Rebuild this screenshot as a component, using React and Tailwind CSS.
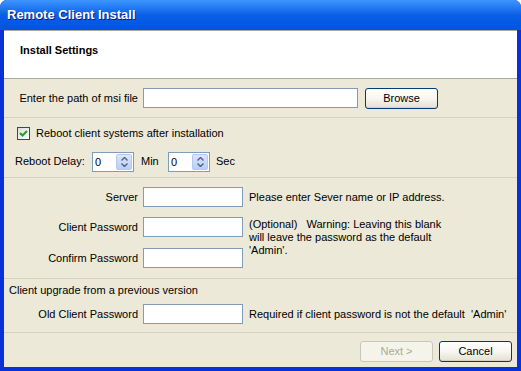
import React from 'react'

function TextBox({ className = '' }) {
    return <div className={`h-[20px] bg-white border border-[#7f9db9] ${className}`} />
}

function XpButton({ children, disabled }) {
    if (disabled) {
        return (
            <div className="w-[73px] h-[21px] rounded-[3px] border border-[#c9c7ba] bg-[#f5f4ea] text-[#aca899] flex items-center justify-center">
                {children}
            </div>
        )
    }
    return (
        <div className="w-[73px] h-[21px] rounded-[3px] border border-[#003c74] bg-gradient-to-b from-white via-[#f7f6f1] to-[#e3e0d2] text-black flex items-center justify-center shadow-[inset_0_-1px_0_#d6d0c5]">
            {children}
        </div>
    )
}

function Spinner() {
    return (
        <div className="w-[42px] h-[20px] bg-white border border-[#7f9db9] flex items-stretch">
            <div className="flex-1 pl-[2px] leading-[18px]">0</div>
            <div className="w-[16px] m-[1px] rounded-[2px] bg-gradient-to-b from-[#dbe6fc] to-[#b9cdf7] border border-[#b4c8f6] flex flex-col items-center justify-center gap-[2px]">
                <svg width="7" height="4" viewBox="0 0 7 4"><path d="M0.5 3.5 L3.5 0.5 L6.5 3.5" fill="none" stroke="#4d6185" strokeWidth="1.4" /></svg>
                <svg width="7" height="4" viewBox="0 0 7 4"><path d="M0.5 0.5 L3.5 3.5 L6.5 0.5" fill="none" stroke="#4d6185" strokeWidth="1.4" /></svg>
            </div>
        </div>
    )
}

function Label({ children }) {
    return <div className="w-[139px] pr-[5px] text-right">{children}</div>
}

export default function App() {
    return (
        <div className="w-[521px] h-[371px] rounded-t-[7px] bg-[#0831d9] flex flex-col text-[11px] text-black" style={{ fontFamily: '"Liberation Sans", Arial, sans-serif' }}>
            <div className="h-[30px] rounded-t-[7px] bg-gradient-to-b from-[#3d95ff] via-[#0a5fe6] to-[#0054e3] flex items-center px-[7px] shrink-0">
                <span className="text-white font-bold text-[13px] [text-shadow:1px_1px_0_#0a1883]">Remote Client Install</span>
            </div>
            <div className="flex-1 mx-[4px] mb-[4px] bg-[#ece9d8] flex flex-col">
                <div className="h-[49px] bg-white border-t border-[#aca899] border-b border-b-[#aca899] pl-[16px] pt-[11px] font-bold">
                    Install Settings
                </div>
                <div className="h-[38px] flex items-center">
                    <Label>Enter the path of msi file</Label>
                    <TextBox className="w-[215px]" />
                    <div className="ml-[7px]"><XpButton>Browse</XpButton></div>
                </div>
                <div className="h-[60px] border-t border-[#d6d2c2] flex flex-col">
                    <div className="flex items-center pl-[13px] pt-[7px] gap-[6px]">
                        <div className="w-[13px] h-[13px] border border-[#1c5180] bg-gradient-to-br from-[#dcdcd7] to-white flex items-center justify-center">
                            <svg width="9" height="9" viewBox="0 0 9 9"><path d="M1 4 L3.5 6.5 L8 2" fill="none" stroke="#21a121" strokeWidth="2" /></svg>
                        </div>
                        <span>Reboot client systems after installation</span>
                    </div>
                    <div className="flex items-center pl-[11px] mt-[10px]">
                        <span className="w-[77px]">Reboot Delay:</span>
                        <Spinner />
                        <span className="ml-[7px] w-[27px]">Min</span>
                        <Spinner />
                        <span className="ml-[6px]">Sec</span>
                    </div>
                </div>
                <div className="h-[101px] border-t border-[#d6d2c2] flex flex-col pt-[9px] gap-[10px]">
                    <div className="flex items-center">
                        <Label>Server</Label>
                        <TextBox className="w-[100px]" />
                        <span className="ml-[6px]">Please enter Sever name or IP address.</span>
                    </div>
                    <div className="flex items-start h-[20px]">
                        <div className="h-[20px] flex items-center"><Label>Client Password</Label></div>
                        <TextBox className="w-[100px]" />
                        <span className="ml-[6px] leading-[13px] pt-[1px]">(Optional)&nbsp;&nbsp; Warning: Leaving this blank<br />will leave the password as the default<br />'Admin'.</span>
                    </div>
                    <div className="flex items-center mt-[1px]">
                        <Label>Confirm Password</Label>
                        <TextBox className="w-[100px]" />
                    </div>
                </div>
                <div className="h-[54px] border-t border-[#d6d2c2] flex flex-col">
                    <div className="pl-[5px] pt-[5px] leading-[13px]">Client upgrade from a previous version</div>
                    <div className="flex items-center mt-[7px]">
                        <Label>Old Client Password</Label>
                        <TextBox className="w-[100px]" />
                        <span className="ml-[6px]">Required if client password is not the default&nbsp; 'Admin'</span>
                    </div>
                </div>
                <div className="flex-1 border-t border-[#d6d2c2] flex justify-end items-start pt-[8px] pr-[5px] gap-[6px]">
                    <XpButton disabled>Next &gt;</XpButton>
                    <XpButton>Cancel</XpButton>
                </div>
            </div>
        </div>
    )
}
